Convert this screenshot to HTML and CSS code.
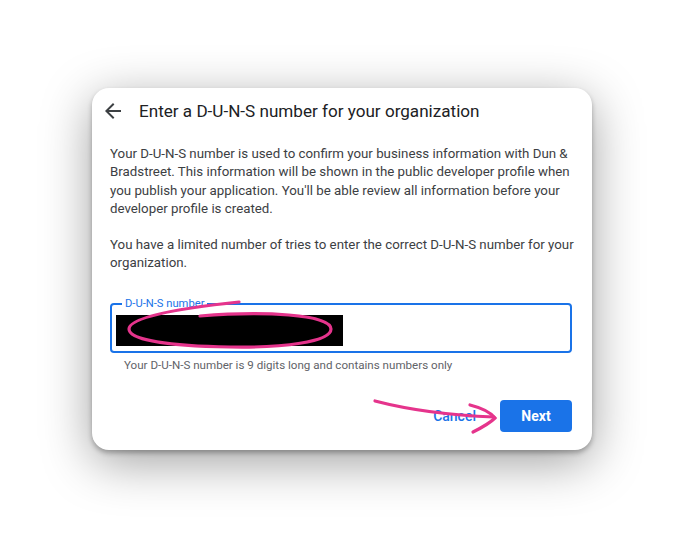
FILE: index.html
```html
<!DOCTYPE html>
<html lang="en">
<head>
  <meta charset="UTF-8">
  <title>D-U-N-S number</title>
  <link rel="stylesheet" href="styles.css">
</head>
<body>
  <div class="page">
    <div class="dialog">
      <div class="dialog-header">
        <svg class="back-icon" width="24" height="24" viewBox="0 0 24 24"><path d="M20 11H7.83l5.59-5.59L12 4l-8 8 8 8 1.41-1.41L7.83 13H20v-2z" fill="#3c4043"/></svg>
        <h1 class="dialog-title">Enter a D-U-N-S number for your organization</h1>
      </div>
      <p class="dialog-text">Your D-U-N-S number is used to confirm your business information with Dun &amp; Bradstreet. This information will be shown in the public developer profile when you publish your application. You'll be able review all information before your developer profile is created.</p>
      <p class="dialog-text">You have a limited number of tries to enter the correct D-U-N-S number for your organization.</p>

      <div class="field">
        <span class="field-label">D-U-N-S number</span>
        <div class="redacted"></div>
      </div>
      <div class="field-hint">Your D-U-N-S number is 9 digits long and contains numbers only</div>

      <div class="actions">
        <button class="btn-text">Cancel</button>
        <button class="btn-primary">Next</button>
      </div>
    </div>
  </div>

  <!-- hand drawn marks on top of the screenshot -->
  <svg class="marks" width="698" height="558" viewBox="0 0 698 558">
    <path d="M200 316 C 262 311, 331 314, 331 329 C 331 342, 282 348, 230 347 C 170 346, 129 340, 129 329 C 129 318, 172 309, 239 302" />
    <path d="M375 401 C 402 408, 442 415, 494 417" />
    <path d="M470 405 C 482 408, 491 413, 495 418 C 489 424, 481 428, 473 432" />
  </svg>
</body>
</html>
```

FILE: styles.css
```css
html, body { height: 100%; }
body { margin: 0; background: #fff; font-family: Roboto, "Liberation Sans", sans-serif; }
.page { padding: 88px 0 108px 92px; }

.dialog {
  width: 500px;
  height: 362px;
  box-sizing: border-box;
  padding: 0 20px 18px 18px;
  background: #fff;
  border-radius: 17px;
  box-shadow: 0 3px 5px rgba(0,0,0,0.28), 0 12px 50px rgba(0,0,0,0.38);
  display: flex;
  flex-direction: column;
}

.dialog-header { display: flex; align-items: center; gap: 14px; margin: 11px 0 0 -9px; height: 24px; }
.back-icon { flex: none; }
.dialog-title { margin: 0; font-size: 17.1px; font-weight: 400; color: #202124; }

.dialog-text { margin: 22px -4px 0 0; font-size: 13.3px; line-height: 18.3px; color: #3c4043; }
.dialog-text + .dialog-text { margin-top: 18px; }

.field {
  position: relative;
  margin-top: 30px;
  height: 50px;
  box-sizing: border-box;
  border: 2px solid #1a73e8;
  border-radius: 4px;
  padding: 9px 4px;
}
.field-label {
  position: absolute;
  top: -8px;
  left: 10px;
  padding: 0 3px;
  background: #fff;
  font-size: 11.2px;
  line-height: 13px;
  color: #1a73e8;
}
.redacted { width: 227px; height: 31px; background: #000; margin-top: 1px; }

.field-hint { margin: 5px 0 0 14px; font-size: 11.6px; line-height: 14px; color: #5f6368; }

.actions { margin-top: auto; display: flex; justify-content: flex-end; gap: 12px; }
.btn-text, .btn-primary {
  font-family: Roboto, "Liberation Sans", sans-serif;
  font-size: 14px;
  height: 32px;
  border: none;
  border-radius: 4px;
  padding: 0 12px;
  background: none;
}
.btn-text { color: #1a73e8; font-weight: 500; }
.btn-primary { width: 72px; background: #1a73e8; color: #fff; font-weight: 700; }

.marks { position: absolute; top: 0; left: 0; pointer-events: none; }
.marks path { fill: none; stroke: #e5348c; stroke-width: 3.2; stroke-linecap: round; }
```
